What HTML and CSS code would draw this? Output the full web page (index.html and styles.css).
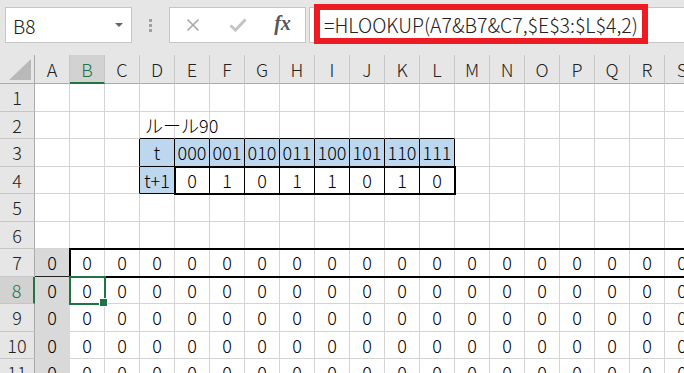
FILE: index.html
```html
<!DOCTYPE html>
<html lang="ja">
<head>
    <meta charset="UTF-8">
    <meta name="viewport" content="width=device-width, initial-scale=1.0">
    <title>ルール90</title>
    <link rel="stylesheet" href="styles.css">
</head>
<body>
    <!-- 数式バー -->
    <div class="toolbar">
        <div class="name-box">
            <span>B8</span>
            <span class="caret"></span>
        </div>
        <div class="grip"><i></i><i></i><i></i></div>
        <div class="fx-buttons">
            <svg width="14" height="14" viewBox="0 0 14 14">
                <path d="M1.5 1.5 L12.5 12.5 M12.5 1.5 L1.5 12.5" stroke="#a8a8a8" stroke-width="1.6" fill="none"/>
            </svg>
            <svg width="18" height="14" viewBox="0 0 18 14">
                <path d="M1.5 7.5 L6.5 12 L16.5 1.5" stroke="#c4c4c4" stroke-width="3" fill="none"/>
            </svg>
            <span class="fx">fx</span>
        </div>
        <div class="formula">
            <span class="formula-text">=HLOOKUP(A7&amp;B7&amp;C7,$E$3:$L$4,2)</span>
        </div>
    </div>

    <!-- シート -->
    <div class="sheet">
        <div class="cells" id="cells"></div>
        <div class="marks">
            <div class="range range-rule"></div>
            <div class="range range-row7"></div>
            <div class="selection"></div>
        </div>
    </div>

    <script>
        document.addEventListener("DOMContentLoaded", function() {
            const cols = "ABCDEFGHIJKLMNOPQRS".split("");
            const patterns = ["000", "001", "010", "011", "100", "101", "110", "111"];
            const next = [0, 1, 0, 1, 1, 0, 1, 0];

            const values = { D2: "ルール90", D3: "t", D4: "t+1" };
            patterns.forEach((p, i) => {
                values[cols[4 + i] + "3"] = p;
                values[cols[4 + i] + "4"] = next[i];
            });
            for (let r = 7; r <= 11; r++) {
                cols.forEach(c => values[c + r] = 0);
            }

            const cells = document.getElementById("cells");
            function add(cls, text) {
                const d = document.createElement("div");
                d.className = cls;
                if (text !== undefined) d.textContent = text;
                cells.appendChild(d);
            }

            add("corner");
            cols.forEach(c => add(c === "B" ? "col-head active" : "col-head", c));

            for (let r = 1; r <= 11; r++) {
                add(r === 8 ? "row-head active" : "row-head", r);
                cols.forEach((c, ci) => {
                    const cls = ["cell"];
                    const inTable = ci >= 3 && ci <= 11;
                    if (inTable && (r === 3 || r === 4)) cls.push("boxed");
                    if ((r === 3 && inTable) || ((r === 4) && ci === 3)) cls.push("blue");
                    if (inTable && r === 2) cls.push("line-below");
                    if (ci === 2 && (r === 3 || r === 4)) cls.push("line-right");
                    if (ci === 0 && r >= 7) cls.push("fill");
                    if (ci === 0 && r === 7) cls.push("line-below");
                    if (c + r === "D2") cls.push("left");
                    add(cls.join(" "), values[c + r]);
                });
            }
        });
    </script>
</body>
</html>
```

FILE: styles.css
```css
* {
    box-sizing: border-box;
}

body {
    margin: 0;
    width: 684px;
    height: 373px;
    overflow: hidden;
    background-color: #fff;
    font-family: "Noto Sans CJK JP", sans-serif;
    font-weight: 300;
    color: #000;
}

/* 数式バー */
.toolbar {
    height: 55px;
    background-color: #e6e6e6;
    display: flex;
    align-items: flex-start;
    padding: 7px 0 0 5px;
}

.name-box {
    width: 127px;
    height: 36px;
    background-color: #fff;
    border: 1px solid #c6c6c6;
    display: flex;
    align-items: center;
    justify-content: space-between;
    padding: 0 8px 0 7px;
    font-size: 19px;
    color: #222;
}

.caret {
    width: 0;
    height: 0;
    border-left: 4px solid transparent;
    border-right: 4px solid transparent;
    border-top: 4px solid #666;
}

.grip {
    width: 37px;
    height: 36px;
    display: flex;
    flex-direction: column;
    align-items: center;
    justify-content: center;
    gap: 2px;
}

.grip i {
    width: 3px;
    height: 3px;
    background-color: #a0a0a0;
}

.fx-buttons {
    width: 137px;
    height: 36px;
    background-color: #fff;
    border: 1px solid #c6c6c6;
    display: grid;
    grid-template-columns: repeat(3, 1fr);
    align-items: center;
    justify-items: center;
}

.fx {
    font-family: "Liberation Serif", serif;
    font-style: italic;
    font-weight: bold;
    font-size: 20px;
    color: #555;
    margin-top: -3px;
}

.formula {
    flex: 1;
    margin-left: 3px;
    height: 36px;
    background-color: #fff;
    border: 1px solid #c6c6c6;
    border-right: none;
    display: flex;
    align-items: center;
    padding-left: 4px;
}

.formula-text {
    width: 334px;
    height: 40px;
    border: 6px solid #ed1c24;
    display: flex;
    align-items: center;
    padding-left: 4px;
    font-size: 19.5px;
    color: #222;
    white-space: nowrap;
    margin-top: -2px;
}

/* シート */
.sheet {
    display: grid;
    width: 684px;
    overflow: hidden;
}

.cells,
.marks {
    grid-area: 1 / 1;
    display: grid;
    grid-template-columns: 35px repeat(19, 35px);
    grid-template-rows: 29px repeat(11, 27.5px);
}

.marks {
    pointer-events: none;
}

.corner {
    background-color: #e6e6e6;
    border-right: 1px solid #ababab;
    border-bottom: 1px solid #ababab;
    position: relative;
}

.corner::after {
    content: "";
    position: absolute;
    right: 3px;
    bottom: 3px;
    width: 22px;
    height: 21px;
    background-color: #b9b9b9;
    clip-path: polygon(100% 0, 100% 100%, 0 100%);
}

.col-head,
.row-head {
    background-color: #e6e6e6;
    display: flex;
    align-items: center;
    justify-content: center;
    font-size: 18px;
    color: #222;
}

.col-head {
    border-right: 1px solid #c6c6c6;
    border-bottom: 1px solid #ababab;
}

.row-head {
    border-right: 1px solid #ababab;
    border-bottom: 1px solid #c6c6c6;
}

.col-head.active {
    background-color: #d2d2d2;
    color: #217346;
    border-bottom: 2px solid #217346;
}

.row-head.active {
    background-color: #d2d2d2;
    color: #217346;
    border-right: 2px solid #217346;
}

.cell {
    border-right: 1px solid #d4d4d4;
    border-bottom: 1px solid #d4d4d4;
    display: flex;
    align-items: center;
    justify-content: center;
    font-size: 18px;
    white-space: nowrap;
}

.cell.left {
    justify-content: flex-start;
    padding-left: 5px;
}

.cell.boxed {
    border-color: #000;
}

.cell.blue {
    background-color: #bdd7ee;
}

.cell.line-below {
    border-bottom-color: #000;
}

.cell.line-right {
    border-right-color: #000;
}

.cell.fill {
    background-color: #d9d9d9;
    border-color: #d9d9d9;
}

.cell.fill.line-below {
    border-bottom-color: #222;
}

/* 罫線・選択範囲 */
.range {
    border: 2px solid #000;
    margin: -1px;
}

.range-rule {
    grid-column: 6 / 14;
    grid-row: 5 / 6;
}

.range-row7 {
    grid-column: 3 / 22;
    grid-row: 8 / 9;
}

.selection {
    grid-column: 3 / 4;
    grid-row: 9 / 10;
    border: 2px solid #217346;
    margin: -1px;
    position: relative;
}

.selection::after {
    content: "";
    position: absolute;
    right: -4px;
    bottom: -4px;
    width: 7px;
    height: 7px;
    background-color: #217346;
    border: 1px solid #fff;
}
```
